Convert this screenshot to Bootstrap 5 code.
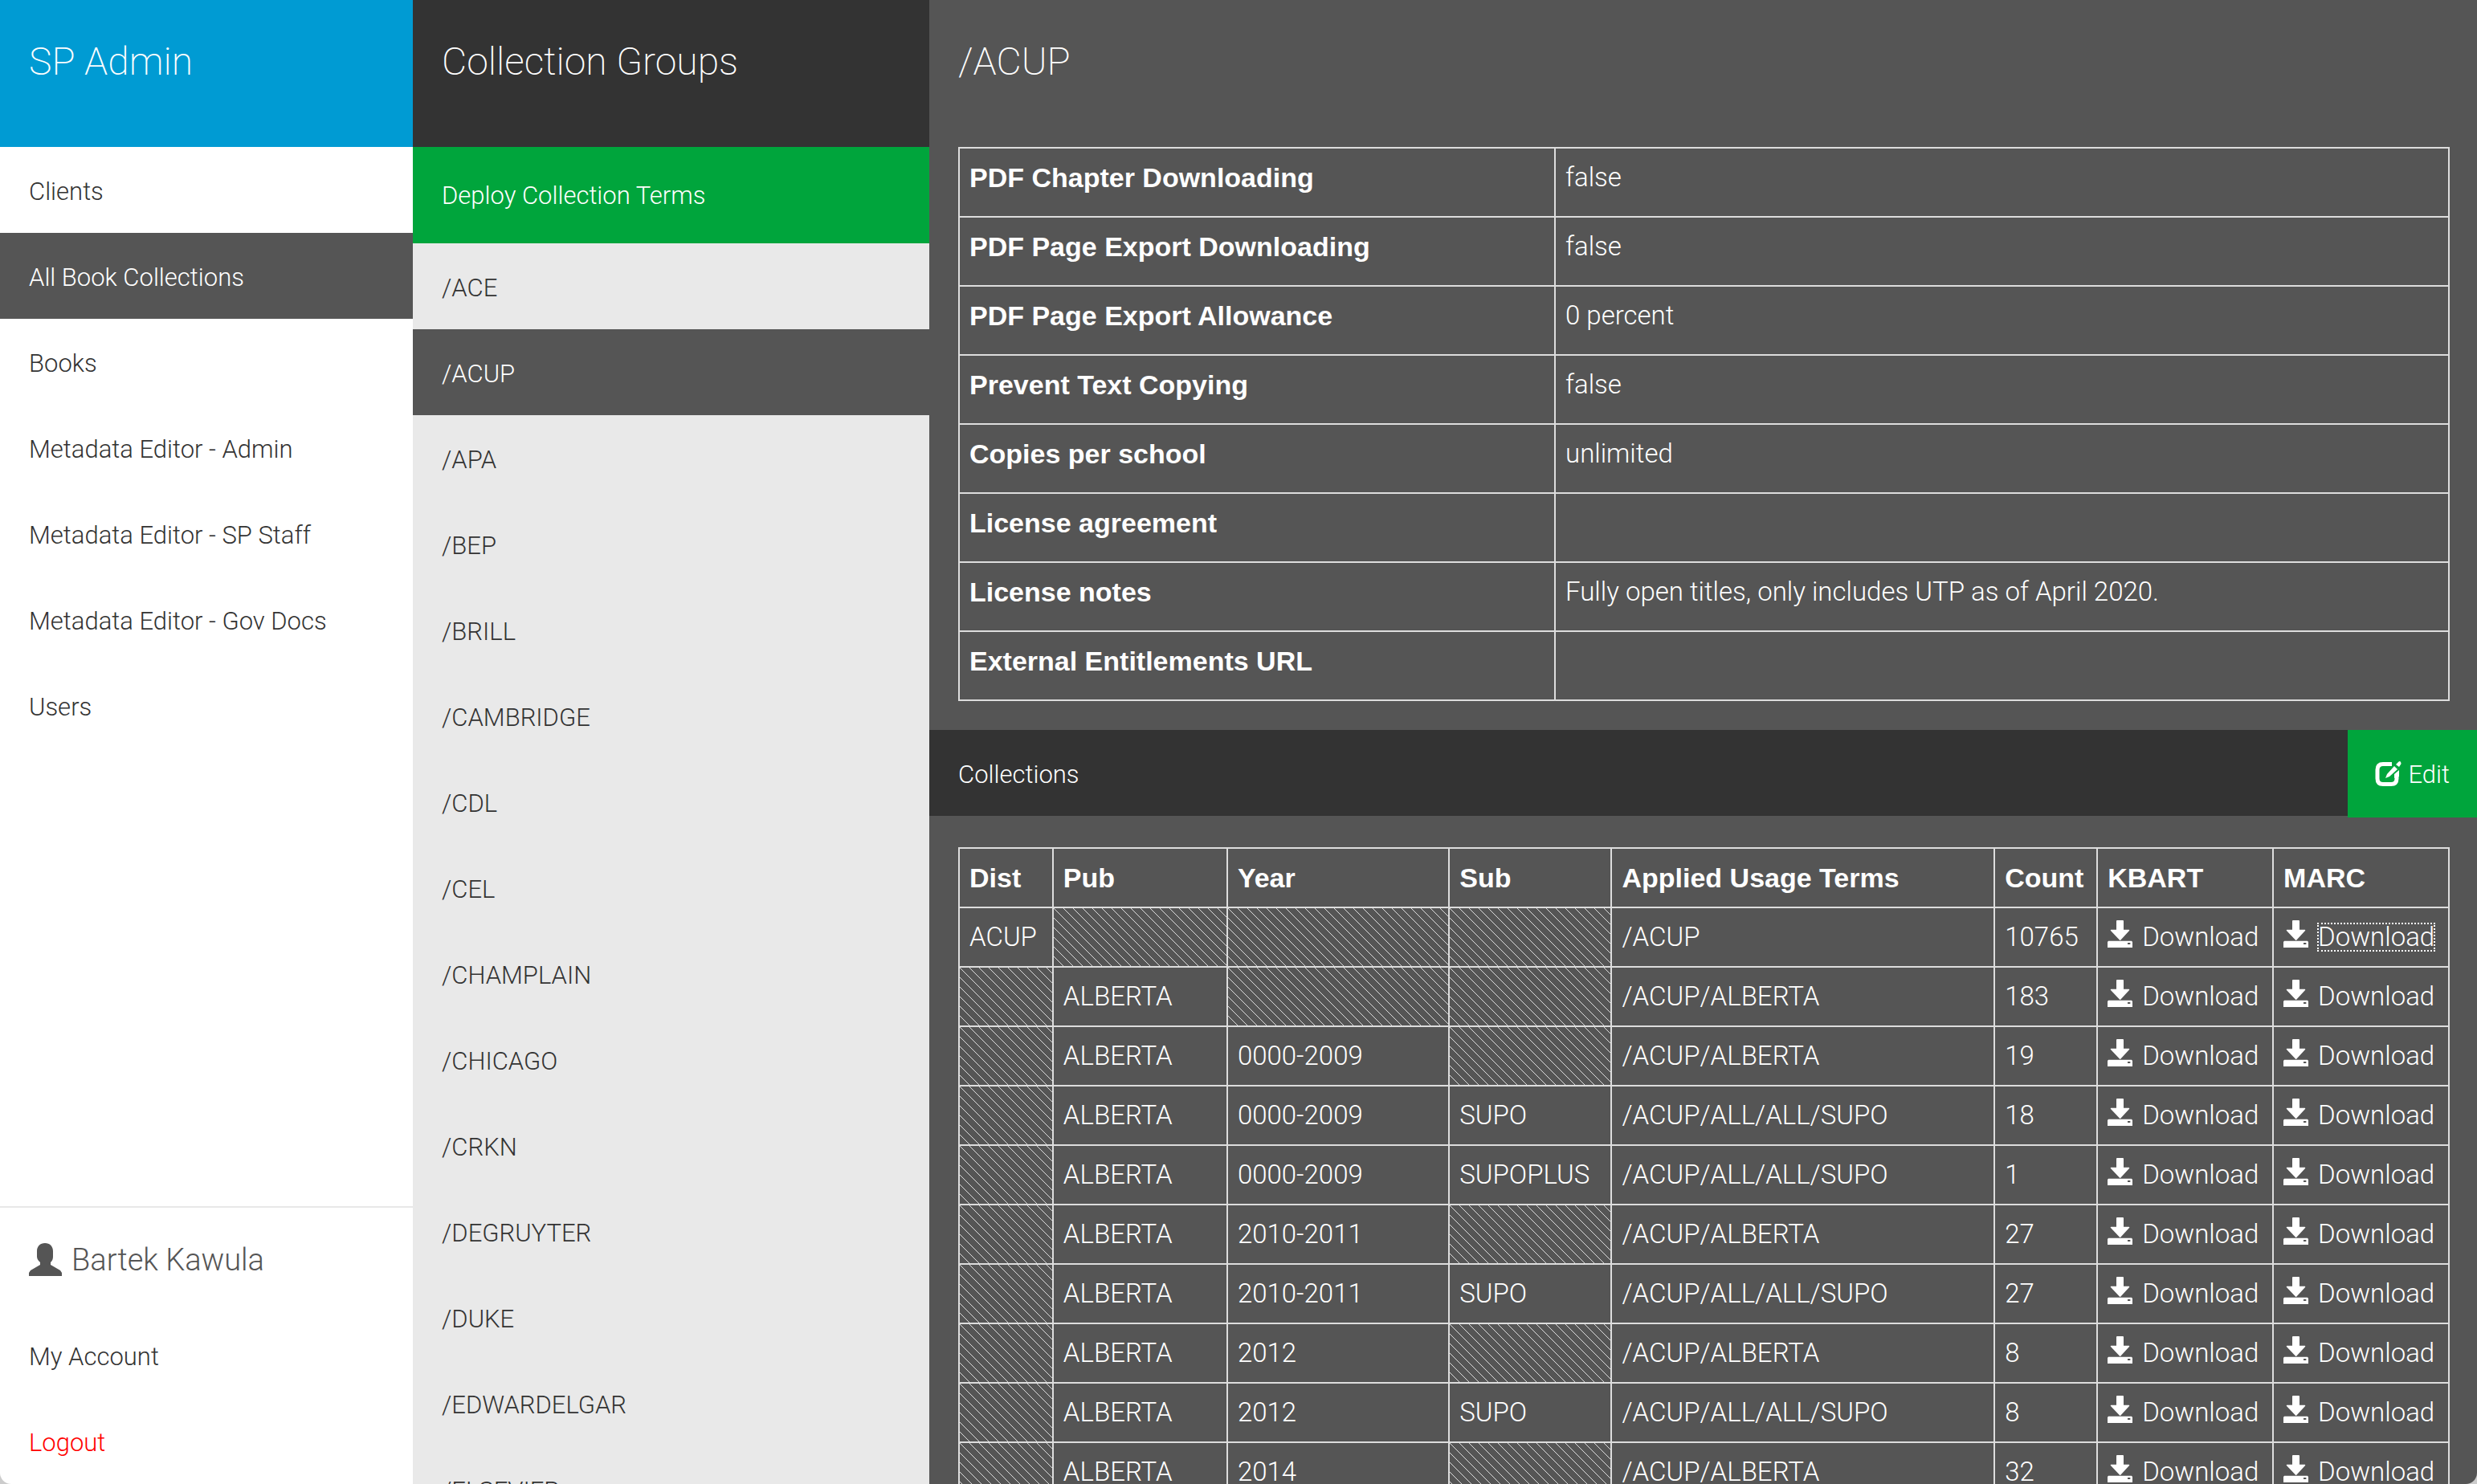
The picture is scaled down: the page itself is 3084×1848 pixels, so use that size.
<!DOCTYPE html>
<html lang="en">
<head>
<meta charset="utf-8">
<meta name="viewport" content="width=device-width, initial-scale=1">
<title>SP Admin</title>
<link rel="stylesheet" href="https://cdn.jsdelivr.net/npm/bootstrap@5.3.0/dist/css/bootstrap.min.css">
<style>
body{background:#ccc;color:#333;font-family:Roboto,"Liberation Sans",sans-serif;font-size:31px;font-weight:300;line-height:47px}
a{color:inherit;text-decoration:none}
.shell{border-radius:0 0 14px 14px}
.side{flex:0 0 16.667%;background:#fff}
.groups{flex:0 0 20.85%;background:#e9e9e9}
.pane{min-width:0;background:#555;color:#fff}
.head{padding:47px 36px 76px;color:#fff}
.head h1,.head h2{margin:0;font-size:48px;line-height:60px;font-weight:200}
.bg-brand{background:#009bd3}
.bg-ink{background:#333}
.bg-go{background:#00a53c;color:#fff}
.item{display:block;padding:32px 36px 28px}
.item.active{background:#555;color:#fff}
.deploy{display:block;padding:37px 36px 36px}
.userbox{border-top:2px solid #e8e8e8}
.who{padding:40px 36px 42px;gap:12px;font-size:38px;line-height:48px;color:#555}
.who span{padding-top:2px;line-height:46px}
.logout{color:#f00}
.body-pad{padding:0 34px 0 36px}
.grid{width:100%;margin:0;table-layout:fixed;border-collapse:collapse;color:#fff;font-size:33px;line-height:48px}
.grid th,.grid td{border:2px solid #ddd;padding:12px;white-space:nowrap;vertical-align:top}
.grid th{font-family:"Liberation Sans",Arial,sans-serif;font-size:34px;font-weight:700}
.terms th,.terms td{padding-bottom:24px}
.hatch{background-image:linear-gradient(45deg,transparent 46%,#ddd 46%,#ddd 54%,transparent 54%);background-size:12px 12px}
.grid svg{width:31px;height:34px;margin-right:12px;vertical-align:-2px}
.grid a{display:inline-block;line-height:34px}
.grid a.focused{outline:2px dotted #fff;outline-offset:-1px}
.bar{margin:36px 0 39px}
.bar h3{margin:0;padding:32px 36px 28px;font-size:31px;line-height:47px;font-weight:300}
.edit{margin-bottom:-2px;padding:2px 34px 0;gap:8px;border:0;font-weight:300}
.edit svg{margin-bottom:2px}
</style>
</head>
<body>
<svg class="d-none" aria-hidden="true">
  <symbol id="dl" viewBox="0 0 93 102"><path fill="currentColor" fill-rule="evenodd" d="M36 0h21q3 0 3 3v32h19q5 0 2 4L50 73q-3 4-6 0L12 39q-3-4 2-4h19V3q0-3 3-3zM3 77h87l3 4v21H0V81zM75 84v6h10v-6z"/></symbol>
</svg>
<div class="shell d-flex vh-100 overflow-hidden">
  <nav class="side d-flex flex-column">
    <div class="head bg-brand"><h1>SP Admin</h1></div>
    <div class="flex-grow-1">
      <a class="item" href="#">Clients</a>
      <a class="item active" href="#">All Book Collections</a>
      <a class="item" href="#">Books</a>
      <a class="item" href="#">Metadata Editor - Admin</a>
      <a class="item" href="#">Metadata Editor - SP Staff</a>
      <a class="item" href="#">Metadata Editor - Gov Docs</a>
      <a class="item" href="#">Users</a>
    </div>
    <div class="userbox">
      <div class="who d-flex align-items-center">
        <svg width="41" height="41" viewBox="0 0 41 41" aria-hidden="true"><path fill="#555" d="M20 0c6 0 10 4 10 10v7c0 3-1 5-3 7v3l12 7 2 3v4H0v-4l2-3 12-7v-3c-2-2-4-4-4-7v-7C10 4 14 0 20 0z"/></svg>
        <span>Bartek Kawula</span>
      </div>
      <a class="item" href="#">My Account</a>
      <a class="item logout" href="#">Logout</a>
    </div>
  </nav>

  <section class="groups">
    <div class="head bg-ink"><h2>Collection Groups</h2></div>
    <a class="deploy bg-go" href="#">Deploy Collection Terms</a>
    <a class="item" href="#">/ACE</a>
    <a class="item active" href="#">/ACUP</a>
    <a class="item" href="#">/APA</a>
    <a class="item" href="#">/BEP</a>
    <a class="item" href="#">/BRILL</a>
    <a class="item" href="#">/CAMBRIDGE</a>
    <a class="item" href="#">/CDL</a>
    <a class="item" href="#">/CEL</a>
    <a class="item" href="#">/CHAMPLAIN</a>
    <a class="item" href="#">/CHICAGO</a>
    <a class="item" href="#">/CRKN</a>
    <a class="item" href="#">/DEGRUYTER</a>
    <a class="item" href="#">/DUKE</a>
    <a class="item" href="#">/EDWARDELGAR</a>
    <a class="item" href="#">/ELSEVIER</a>
  </section>

  <main class="pane flex-grow-1">
    <div class="head"><h2>/ACUP</h2></div>
    <div class="body-pad">
      <table class="grid terms">
        <colgroup><col style="width:40%"><col style="width:60%"></colgroup>
        <tbody>
          <tr><th scope="row">PDF Chapter Downloading</th><td>false</td></tr>
          <tr><th scope="row">PDF Page Export Downloading</th><td>false</td></tr>
          <tr><th scope="row">PDF Page Export Allowance</th><td>0 percent</td></tr>
          <tr><th scope="row">Prevent Text Copying</th><td>false</td></tr>
          <tr><th scope="row">Copies per school</th><td>unlimited</td></tr>
          <tr><th scope="row">License agreement</th><td></td></tr>
          <tr><th scope="row">License notes</th><td>Fully open titles, only includes UTP as of April 2020.</td></tr>
          <tr><th scope="row">External Entitlements URL</th><td></td></tr>
        </tbody>
      </table>
    </div>
    <div class="bar bg-ink d-flex justify-content-between">
      <h3>Collections</h3>
      <button type="button" class="edit bg-go d-flex align-items-center">
        <svg width="33" height="31" viewBox="0 0 33 31" aria-hidden="true"><path fill="none" stroke="#fff" stroke-width="5" d="M21 3.500H10Q3 3.500 3 10.500v11q0 7 7 7h10q7 0 7-7V16"/><path fill="#00a53c" d="M19 9l9-9 5 5-7 10z"/><path fill="#fff" d="M24 6l4 4-10 9-5 2 2-5zM26 4l3-3q2-2 3 0t0 3l-2 3zM24 16l6-5v8l-6 2z"/></svg>
        <span>Edit</span>
      </button>
    </div>
    <div class="body-pad">
      <table class="grid">
        <colgroup><col style="width:6.3%"><col style="width:11.7%"><col style="width:14.9%"><col style="width:10.9%"><col style="width:25.7%"><col style="width:6.9%"><col style="width:11.8%"><col style="width:11.8%"></colgroup>
        <thead>
          <tr><th scope="col">Dist</th><th scope="col">Pub</th><th scope="col">Year</th><th scope="col">Sub</th><th scope="col">Applied Usage Terms</th><th scope="col">Count</th><th scope="col">KBART</th><th scope="col">MARC</th></tr>
        </thead>
        <tbody>
          <tr><td>ACUP</td><td class="hatch"></td><td class="hatch"></td><td class="hatch"></td><td>/ACUP</td><td>10765</td><td><svg><use href="#dl"/></svg><a href="#">Download</a></td><td><svg><use href="#dl"/></svg><a class="focused" href="#">Download</a></td></tr>
          <tr><td class="hatch"></td><td>ALBERTA</td><td class="hatch"></td><td class="hatch"></td><td>/ACUP/ALBERTA</td><td>183</td><td><svg><use href="#dl"/></svg><a href="#">Download</a></td><td><svg><use href="#dl"/></svg><a href="#">Download</a></td></tr>
          <tr><td class="hatch"></td><td>ALBERTA</td><td>0000-2009</td><td class="hatch"></td><td>/ACUP/ALBERTA</td><td>19</td><td><svg><use href="#dl"/></svg><a href="#">Download</a></td><td><svg><use href="#dl"/></svg><a href="#">Download</a></td></tr>
          <tr><td class="hatch"></td><td>ALBERTA</td><td>0000-2009</td><td>SUPO</td><td>/ACUP/ALL/ALL/SUPO</td><td>18</td><td><svg><use href="#dl"/></svg><a href="#">Download</a></td><td><svg><use href="#dl"/></svg><a href="#">Download</a></td></tr>
          <tr><td class="hatch"></td><td>ALBERTA</td><td>0000-2009</td><td>SUPOPLUS</td><td>/ACUP/ALL/ALL/SUPO</td><td>1</td><td><svg><use href="#dl"/></svg><a href="#">Download</a></td><td><svg><use href="#dl"/></svg><a href="#">Download</a></td></tr>
          <tr><td class="hatch"></td><td>ALBERTA</td><td>2010-2011</td><td class="hatch"></td><td>/ACUP/ALBERTA</td><td>27</td><td><svg><use href="#dl"/></svg><a href="#">Download</a></td><td><svg><use href="#dl"/></svg><a href="#">Download</a></td></tr>
          <tr><td class="hatch"></td><td>ALBERTA</td><td>2010-2011</td><td>SUPO</td><td>/ACUP/ALL/ALL/SUPO</td><td>27</td><td><svg><use href="#dl"/></svg><a href="#">Download</a></td><td><svg><use href="#dl"/></svg><a href="#">Download</a></td></tr>
          <tr><td class="hatch"></td><td>ALBERTA</td><td>2012</td><td class="hatch"></td><td>/ACUP/ALBERTA</td><td>8</td><td><svg><use href="#dl"/></svg><a href="#">Download</a></td><td><svg><use href="#dl"/></svg><a href="#">Download</a></td></tr>
          <tr><td class="hatch"></td><td>ALBERTA</td><td>2012</td><td>SUPO</td><td>/ACUP/ALL/ALL/SUPO</td><td>8</td><td><svg><use href="#dl"/></svg><a href="#">Download</a></td><td><svg><use href="#dl"/></svg><a href="#">Download</a></td></tr>
          <tr><td class="hatch"></td><td>ALBERTA</td><td>2014</td><td class="hatch"></td><td>/ACUP/ALBERTA</td><td>32</td><td><svg><use href="#dl"/></svg><a href="#">Download</a></td><td><svg><use href="#dl"/></svg><a href="#">Download</a></td></tr>
        </tbody>
      </table>
    </div>
  </main>
</div>
<script src="https://cdn.jsdelivr.net/npm/bootstrap@5.3.0/dist/js/bootstrap.bundle.min.js"></script>
</body>
</html>
